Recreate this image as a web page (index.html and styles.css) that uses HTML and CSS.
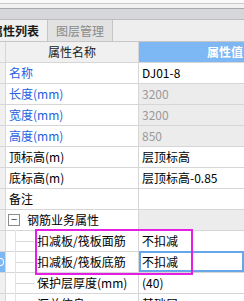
FILE: index.html
```html
<!DOCTYPE html>
<html lang="zh-CN">
<head>
    <meta charset="UTF-8">
    <title>属性列表</title>
    <link rel="stylesheet" href="styles.css">
</head>
<body>
<div class="panel">
    <div class="chrome-top"></div>
    <div class="chrome-mid"></div>
    <div class="chrome-title"></div>
    <div class="tabs">
        <div class="tab active">属性列表</div>
        <div class="tab">图层管理</div>
    </div>
    <div class="grid">
        <div class="row head">
            <div class="gutter"></div>
            <div class="name">属性名称</div>
            <div class="value">属性值</div>
        </div>
        <div class="row">
            <div class="gutter"></div>
            <div class="name blue">名称</div>
            <div class="value">DJ01-8</div>
        </div>
        <div class="row">
            <div class="gutter"></div>
            <div class="name blue">长度(mm)</div>
            <div class="value locked">3200</div>
        </div>
        <div class="row">
            <div class="gutter"></div>
            <div class="name blue">宽度(mm)</div>
            <div class="value locked">3200</div>
        </div>
        <div class="row">
            <div class="gutter"></div>
            <div class="name blue">高度(mm)</div>
            <div class="value locked">850</div>
        </div>
        <div class="row">
            <div class="gutter"></div>
            <div class="name">顶标高(m)</div>
            <div class="value">层顶标高</div>
        </div>
        <div class="row">
            <div class="gutter"></div>
            <div class="name">底标高(m)</div>
            <div class="value">层顶标高-0.85</div>
        </div>
        <div class="row">
            <div class="gutter"></div>
            <div class="name">备注</div>
            <div class="value"></div>
        </div>
        <div class="row">
            <div class="gutter"></div>
            <div class="name group"><span class="toggle">−</span>钢筋业务属性</div>
            <div class="value locked"></div>
        </div>
        <div class="row">
            <div class="gutter"></div>
            <div class="name child">扣减板/筏板面筋</div>
            <div class="value">不扣减</div>
        </div>
        <div class="row">
            <div class="gutter current"><span class="dot"></span></div>
            <div class="name child">扣减板/筏板底筋</div>
            <div class="value selected">不扣减</div>
        </div>
        <div class="row">
            <div class="gutter"></div>
            <div class="name child">保护层厚度(mm)</div>
            <div class="value">(40)</div>
        </div>
        <div class="row">
            <div class="gutter"></div>
            <div class="name child">汇总信息</div>
            <div class="value">基础层</div>
        </div>
    </div>
    <div class="mark"></div>
</div>
</body>
</html>
```

FILE: styles.css
```css
body {
    margin: 0;
    font-family: "Noto Sans CJK SC", "Noto Sans", sans-serif;
    font-size: 12px;
    color: #000;
    background-color: #fff;
}
.panel {
    position: relative;
    width: 244px;
    height: 301px;
    overflow: hidden;
    background-color: #fff;
}
.chrome-top {
    height: 3px;
    background-color: #f9f9f9;
    border-bottom: 1px solid #c9c9c9;
}
.chrome-mid {
    height: 4px;
    background-color: #f1f1f1;
    border-bottom: 1px solid #a9a9a9;
}
.chrome-title {
    height: 10px;
    background-color: #d6d7db;
    border-bottom: 1px solid #bdbdbd;
}
.tabs {
    display: flex;
    height: 21px;
    background-color: #eeeeee;
    border-bottom: 1px solid #c6c6c6;
}
.tab {
    width: 64px;
    line-height: 21px;
    text-align: center;
    color: #8a8a8a;
    background-color: #e2e2e2;
    border-right: 1px solid #c6c6c6;
}
.tab.active {
    margin-left: -17px;
    color: #1a1a1a;
    background-color: #f0f0f0;
    font-weight: bold;
}
.row {
    display: flex;
    height: 21px;
    box-sizing: border-box;
    border-bottom: 1px solid #d6d6d6;
    line-height: 20px;
}
.gutter {
    width: 5px;
    flex: none;
    background-color: #f0f0f0;
    border-right: 1px solid #d6d6d6;
    position: relative;
}
.gutter.current {
    background-color: #7db7f4;
}
.dot {
    position: absolute;
    left: -3px;
    top: 6px;
    width: 5px;
    height: 6px;
    border: 1px solid #fff;
    border-radius: 50%;
}
.name {
    width: 129px;
    flex: none;
    padding-left: 3px;
    border-right: 1px solid #d6d6d6;
    white-space: nowrap;
    position: relative;
}
.value {
    flex: 1;
    padding-left: 3px;
    white-space: nowrap;
}
.head .name {
    text-align: center;
    padding-left: 0;
    width: 132px;
    background-color: #f0f0f0;
    color: #222;
}
.head .value {
    background-color: #7db7f4;
    color: #fff;
    padding-left: 68px;
    font-weight: bold;
}
.blue {
    color: #2460e0;
}
.locked {
    background-color: #ececec;
    color: #9a9a9a;
}
.group {
    padding-left: 21px;
    width: 111px;
}
.toggle {
    position: absolute;
    left: 2px;
    top: 4px;
    width: 10px;
    height: 10px;
    border: 1px solid #8c8c8c;
    background-color: #fff;
    line-height: 9px;
    text-align: center;
    font-size: 11px;
    color: #333;
}
.child {
    padding-left: 31px;
    width: 101px;
}
.child::before {
    content: "";
    position: absolute;
    left: 9px;
    top: -1px;
    bottom: -1px;
    width: 1px;
    background-color: #e4e4e4;
}
.child::after {
    content: "";
    position: absolute;
    left: 10px;
    top: 10px;
    width: 18px;
    height: 1px;
    background-color: #d8d8d8;
}
.selected {
    box-shadow: inset 0 0 0 2px #67a6e8;
    margin-top: -1px;
    padding-top: 1px;
}
.mark {
    position: absolute;
    left: 35px;
    top: 229px;
    width: 158px;
    height: 46px;
    box-sizing: border-box;
    border: 2px solid #e41ee4;
}
```
